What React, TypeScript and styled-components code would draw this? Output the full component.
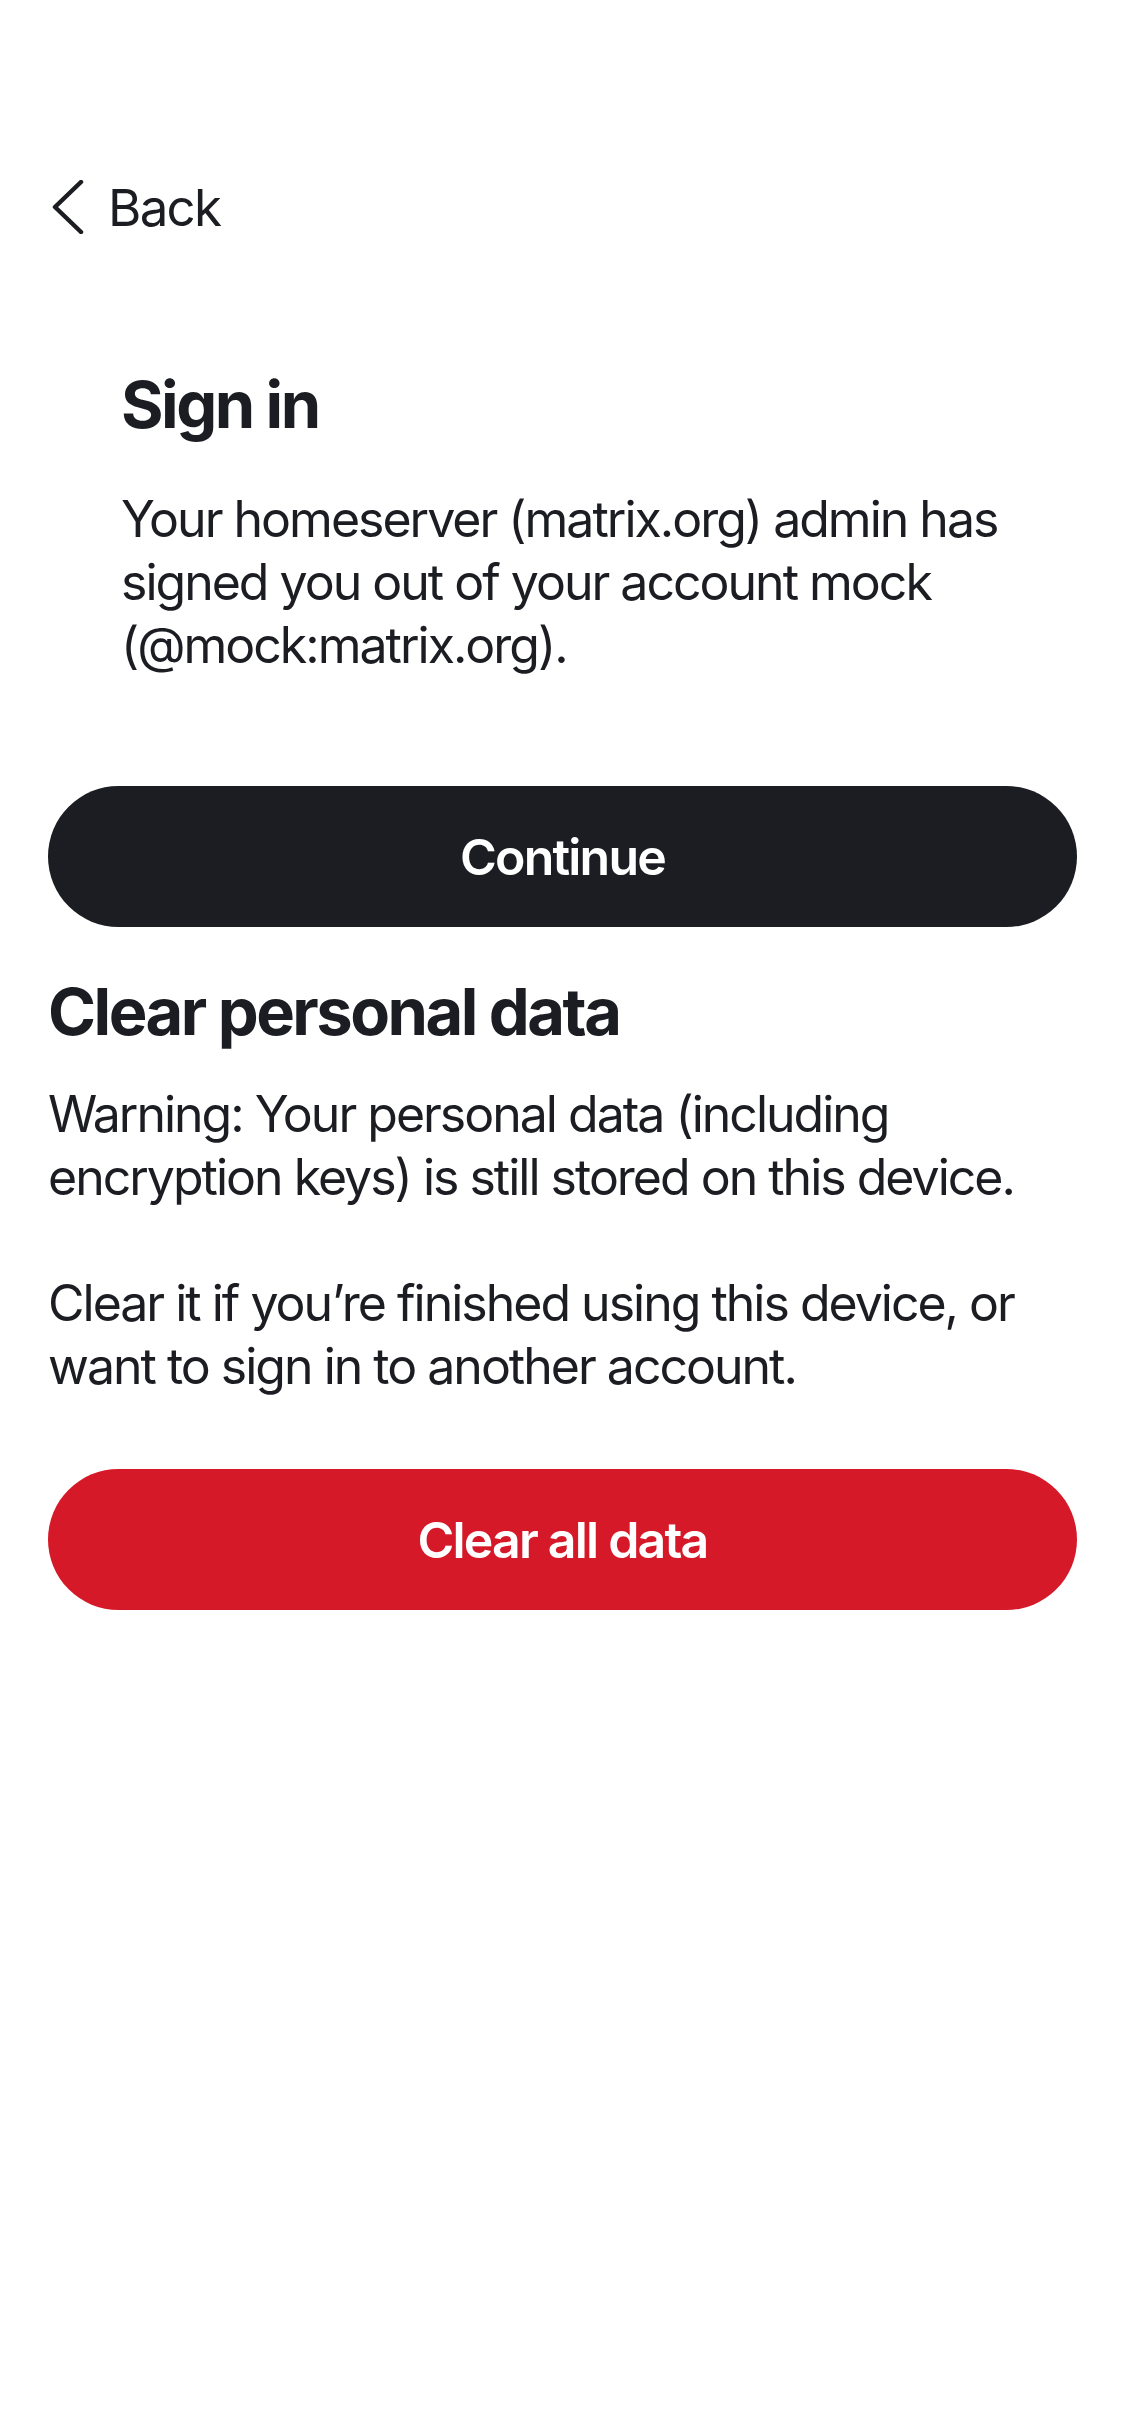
import React from "react";
import styled, { createGlobalStyle } from "styled-components";

const Global = createGlobalStyle`
  html, body { margin: 0; padding: 0; background: #ffffff; }
  body {
    font-family: Inter, "Open Sans", "Liberation Sans", sans-serif;
    color: #1b1d22;
    -webkit-font-smoothing: antialiased;
  }
  * { box-sizing: border-box; }
`;

const Screen = styled.div`
  width: 1125px;
  min-height: 2436px;
  background: #ffffff;
  display: flex;
  flex-direction: column;
  padding: 163px 48px 0;
`;

const NavBar = styled.div`
  height: 88px;
  display: flex;
  align-items: center;
`;

const BackButton = styled.button`
  display: flex;
  align-items: center;
  gap: 23px;
  border: none;
  background: none;
  padding: 0 0 0 3px;
  font: inherit;
  font-size: 51px;
  line-height: 63px;
  letter-spacing: -1.7px;
  color: #1b1d22;
  cursor: pointer;
`;

const SignInSection = styled.section`
  display: flex;
  flex-direction: column;
  padding: 114px 73px 0;
`;

const Title = styled.h1`
  margin: 0;
  font-size: 65px;
  line-height: 80px;
  font-weight: 700;
  letter-spacing: -2.5px;
  color: #1b1d22;
`;

const Body = styled.p<{ $gap: number }>`
  margin: ${(p) => p.$gap}px 0 0;
  font-size: 50px;
  line-height: 63px;
  font-weight: 400;
  letter-spacing: -2px;
  color: #1b1d22;
  white-space: pre-line;
`;

const PillButton = styled.button<{ $tone: "dark" | "danger"; $gap: number }>`
  margin-top: ${(p) => p.$gap}px;
  width: 100%;
  height: 141px;
  border: none;
  border-radius: 71px;
  background: ${(p) => (p.$tone === "dark" ? "#1b1d22" : "#d51928")};
  color: #ffffff;
  font: inherit;
  font-size: 50px;
  font-weight: 600;
  letter-spacing: -1.8px;
  display: flex;
  align-items: center;
  justify-content: center;
`;

const Section = styled.section`
  display: flex;
  flex-direction: column;
`;

const SectionTitle = styled(Title)`
  margin-top: 45px;
`;

function Chevron() {
  return (
    <svg width="34" height="54" viewBox="0 0 34 54" fill="none" aria-hidden>
      <path
        d="M30 2 L4 27 L30 52"
        stroke="#1b1d22"
        strokeWidth="4.5"
        strokeLinecap="round"
        strokeLinejoin="round"
      />
    </svg>
  );
}

export default function App() {
  return (
    <>
      <Global />
      <Screen>
        <NavBar>
          <BackButton>
            <Chevron />
            Back
          </BackButton>
        </NavBar>
        <SignInSection>
          <Title>Sign in</Title>
          <Body $gap={43}>
            Your homeserver (matrix.org) admin has signed you out of your account mock (@mock:matrix.org).
          </Body>
        </SignInSection>
        <PillButton $tone="dark" $gap={109}>Continue</PillButton>
        <Section>
          <SectionTitle>Clear personal data</SectionTitle>
          <Body $gap={31}>
            {"Warning: Your personal data (including encryption keys) is still stored on this device.\n\nClear it if you\u2019re finished using this device, or want to sign in to another account."}
          </Body>
        </Section>
        <PillButton $tone="danger" $gap={71}>Clear all data</PillButton>
      </Screen>
    </>
  );
}
